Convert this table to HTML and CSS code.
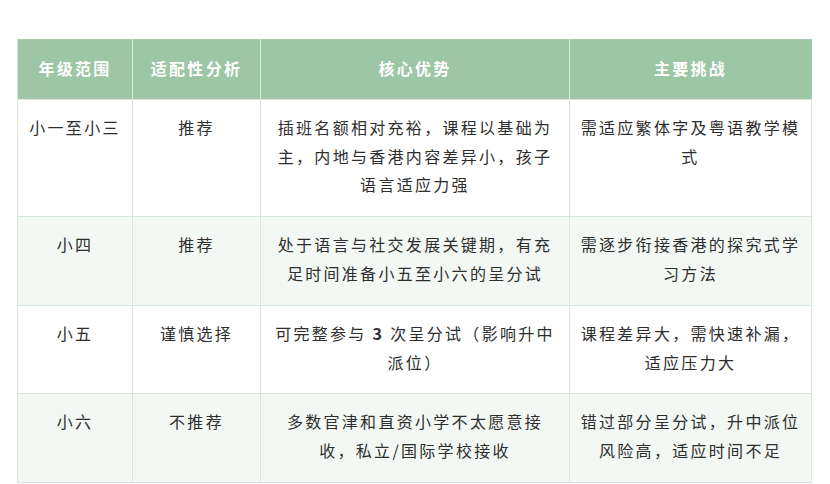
FILE: index.html
```html
<!DOCTYPE html>
<html lang="zh-CN">
<head>
<meta charset="utf-8">
<link rel="stylesheet" href="styles.css">
</head>
<body>
<table class="grade-table">
  <colgroup>
    <col class="c1"><col class="c2"><col class="c3"><col class="c4">
  </colgroup>
  <thead>
    <tr><th>年级范围</th><th>适配性分析</th><th>核心优势</th><th>主要挑战</th></tr>
  </thead>
  <tbody>
    <tr>
      <td>小一至小三</td><td>推荐</td>
      <td>插班名额相对充裕，课程以基础为主，内地与香港内容差异小，孩子语言适应力强</td>
      <td>需适应繁体字及粤语教学模式</td>
    </tr>
    <tr class="alt">
      <td>小四</td><td>推荐</td>
      <td>处于语言与社交发展关键期，有充足时间准备小五至小六的呈分试</td>
      <td>需逐步衔接香港的探究式学习方法</td>
    </tr>
    <tr>
      <td>小五</td><td>谨慎选择</td>
      <td>可完整参与 <span class="num">3</span> 次呈分试（影响升中派位）</td>
      <td>课程差异大，需快速补漏，适应压力大</td>
    </tr>
    <tr class="alt">
      <td>小六</td><td>不推荐</td>
      <td>多数官津和直资小学不太愿意接收，私立/国际学校接收</td>
      <td>错过部分呈分试，升中派位风险高，适应时间不足</td>
    </tr>
  </tbody>
</table>
</body>
</html>
```

FILE: styles.css
```css
html, body {
  margin: 0;
  padding: 0;
  background: #ffffff;
}
body {
  font-family: "Noto Sans CJK SC", sans-serif;
  color: #2e2e2e;
}
.grade-table {
  margin: 39px 0 0 17px;
  width: 794px;
  table-layout: fixed;
  border-collapse: collapse;
  border: 1px solid #a8caae;
  font-size: 16px;
  letter-spacing: 2.3px;
  line-height: 28.8px;
}
.c1 { width: 115px; }
.c2 { width: 128px; }
.c3 { width: 309px; }
.c4 { width: 242px; }
.grade-table th {
  background: #9cc6a4;
  color: #ffffff;
  font-weight: 700;
  padding: 14px 9px 16px;
  border-left: 1px solid #d8eadd;
  text-align: center;
}
.grade-table td {
  padding: 13px 9px 17px;
  border: 1px solid #d5e8db;
  text-align: center;
  vertical-align: top;
}
.grade-table tr.alt td {
  background: #f3f8f4;
}
.num {
  font-weight: 700;
}
```
